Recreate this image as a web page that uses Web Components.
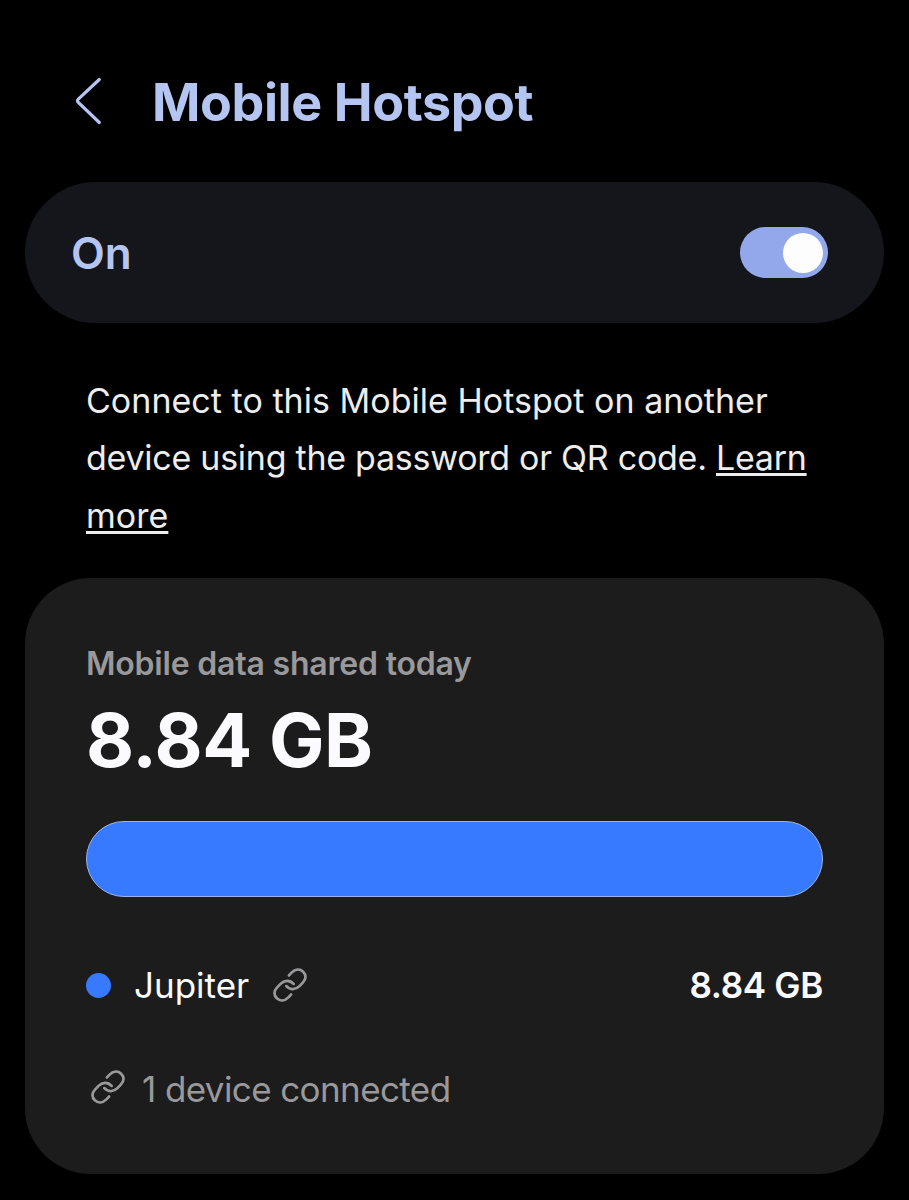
<!DOCTYPE html>
<html lang="en">
<head>
<meta charset="UTF-8">
<title>Mobile Hotspot</title>
<style>
  body {
      margin: 0;
      background: #000;
      color: #fafaff;
      font-family: Inter, 'Liberation Sans', sans-serif;
  }
</style>
</head>
<body>
<hotspot-page>
    <page-header slot="header">Mobile Hotspot</page-header>
    <toggle-row>On</toggle-row>
    <help-text>
        <text-line>Connect to this Mobile Hotspot on another</text-line>
        <text-line style="--spacing: -0.26px">device using the password or QR code. <text-link>Learn</text-link></text-line>
        <text-line><text-link>more</text-link></text-line>
    </help-text>
    <usage-card>
        <span slot="label">Mobile data shared today</span>
        <span slot="total">8.84 GB</span>
        <device-row slot="devices">Jupiter<span slot="amount">8.84 GB</span></device-row>
        <span slot="status">1 device connected</span>
    </usage-card>
</hotspot-page>

<script>
function define(name, html) {
    const template = document.createElement('template');
    template.innerHTML = html;

    window.customElements.define(name, class extends HTMLElement {
        constructor() {
            super();
            this.attachShadow({ mode: 'open' });
            this.shadowRoot.appendChild(template.content.cloneNode(true));
        }
    });
}

define('hotspot-page', `
<style>
  :host {
      display: flex;
      flex-direction: column;
      box-sizing: border-box;
      height: 1200px;
      padding: 0 25px 26px;
  }
</style>
<slot name="header"></slot>
<slot></slot>
`);

define('page-header', `
<style>
  :host {
      display: flex;
      align-items: center;
      box-sizing: border-box;
      height: 182px;
      padding: 20px 0 0 47px;
      color: #b5c5f2;
  }

  svg {
      width: 34px;
      height: 50px;
      margin-right: 46px;
  }

  h1 {
      margin: 0;
      padding-top: 3px;
      font-size: 52px;
      font-weight: 700;
      line-height: 64px;
      letter-spacing: -0.4px;
      white-space: nowrap;
  }
</style>
<svg viewBox="0 0 34 50" fill="none" stroke="currentColor" stroke-width="3.2" stroke-linecap="round" stroke-linejoin="round">
    <path d="M27.3 3.5 L6.3 23.2 Q4.7 24.7 6.3 26.3 L27.3 46.5" />
</svg>
<h1><slot></slot></h1>
`);

define('toggle-switch', `
<style>
  :host {
      display: flex;
      justify-content: flex-end;
      align-items: center;
      box-sizing: border-box;
      width: 88px;
      height: 51px;
      padding: 5px;
      border-radius: 26px;
      background: #92a8ea;
  }

  .thumb {
      width: 40px;
      height: 40px;
      border-radius: 50%;
      background: #fdfdfd;
  }
</style>
<div class="thumb"></div>
`);

define('toggle-row', `
<style>
  :host {
      display: flex;
      justify-content: space-between;
      align-items: center;
      box-sizing: border-box;
      height: 141px;
      padding: 0 56px 0 46px;
      border-radius: 71px;
      background: #15161b;
      color: #b5c5f2;
      font-size: 44px;
      font-weight: 600;
      line-height: 56px;
  }
</style>
<span><slot></slot></span>
<toggle-switch></toggle-switch>
`);

define('help-text', `
<style>
  :host {
      display: block;
      box-sizing: border-box;
      height: 255px;
      padding: 49px 50px 0 61px;
      color: #ededed;
      font-size: 34px;
      line-height: 57.4px;
  }
</style>
<slot></slot>
`);

define('text-line', `
<style>
  :host {
      display: block;
      letter-spacing: var(--spacing, 0.03px);
      white-space: nowrap;
  }
</style>
<slot></slot>
`);

define('text-link', `
<style>
  :host {
      display: inline;
      text-decoration: underline;
      text-decoration-thickness: 3px;
      text-underline-offset: 3px;
      text-decoration-skip-ink: none;
  }
</style>
<slot></slot>
`);

define('link-icon', `
<style>
  :host {
      display: block;
      width: 34px;
      height: 34px;
      color: #99999b;
  }

  svg {
      display: block;
  }
</style>
<svg width="34" height="34" viewBox="0 0 33.4 33.4" fill="none" stroke="currentColor" stroke-width="2.7" stroke-linecap="round">
    <path d="M15.7 7.3 L18 4.8 C22 0.8 26.5 0.6 29.6 3.6 C32.7 6.6 32.8 10.8 29.3 14.4 L26 17.8 C22.5 21.4 17 21.9 13.2 17.8" />
    <path d="M15.7 7.3 L18 4.8 C22 0.8 26.5 0.6 29.6 3.6 C32.7 6.6 32.8 10.8 29.3 14.4 L26 17.8 C22.5 21.4 17 21.9 13.2 17.8" transform="rotate(180 16.7 16.7)" />
</svg>
`);

define('device-row', `
<style>
  :host {
      display: flex;
      align-items: center;
      height: 50px;
      font-size: 35px;
      line-height: 50px;
  }

  .dot {
      width: 25px;
      height: 25px;
      margin-right: 23px;
      border-radius: 50%;
      background: #387aff;
  }

  link-icon {
      margin-left: 24px;
  }

  .amount {
      margin-left: auto;
      font-weight: 600;
      letter-spacing: -0.3px;
  }
</style>
<div class="dot"></div>
<span><slot></slot></span>
<link-icon></link-icon>
<span class="amount"><slot name="amount"></slot></span>
`);

define('usage-card', `
<style>
  :host {
      display: block;
      box-sizing: border-box;
      height: 596px;
      padding: 65px 61px 0;
      border-radius: 66px;
      background: #1c1c1c;
  }

  .label {
      color: #99999b;
      font-size: 32px;
      font-weight: 600;
      line-height: 42px;
      letter-spacing: -0.2px;
  }

  .total {
      font-size: 74px;
      font-weight: 700;
      line-height: 90px;
      padding-top: 10px;
      letter-spacing: -0.4px;
  }

  .bar {
      box-sizing: border-box;
      height: 76px;
      margin: 36px 0 63px;
      border: 1px solid #9fb4e4;
      border-radius: 38px;
      background: #387aff;
  }

  .status {
      display: flex;
      align-items: center;
      gap: 17px;
      margin-top: 54px;
      padding-left: 5px;
      color: #99999b;
      font-size: 35px;
      line-height: 50px;
      letter-spacing: -0.6px;
  }

  .status link-icon {
      margin-bottom: 5px;
  }
</style>
<div class="label"><slot name="label"></slot></div>
<div class="total"><slot name="total"></slot></div>
<div class="bar"></div>
<slot name="devices"></slot>
<div class="status">
    <link-icon></link-icon>
    <slot name="status"></slot>
</div>
`);
</script>
</body>
</html>
